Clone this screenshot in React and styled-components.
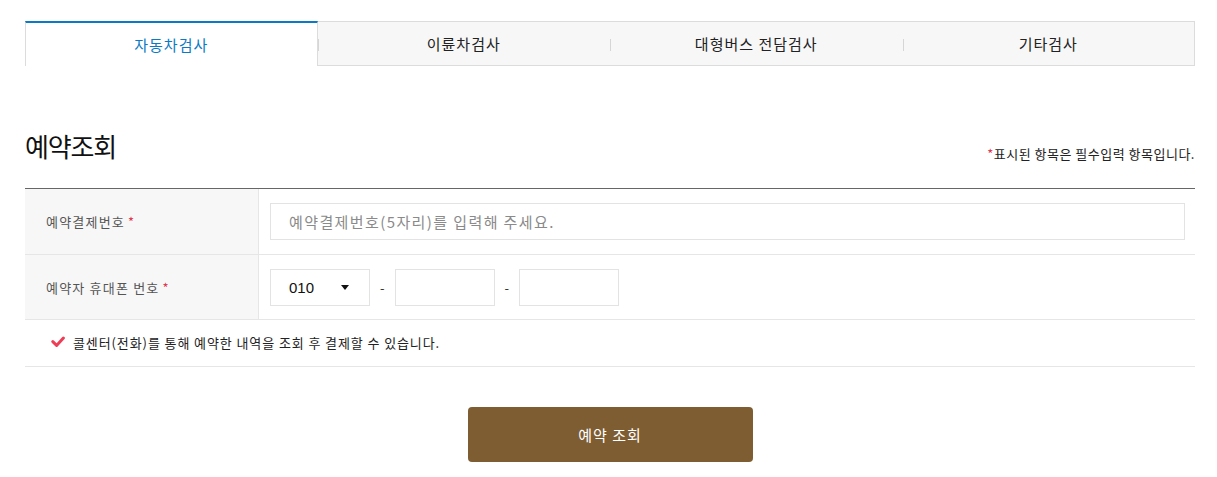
import React from 'react'
import styled, { createGlobalStyle } from 'styled-components'

const GlobalStyle = createGlobalStyle`
  body {
    margin: 0;
    background: #fff;
    font-family: 'Noto Sans CJK KR', 'Noto Sans', sans-serif;
    color: #222;
  }
  * {
    box-sizing: border-box;
  }
`

const Page = styled.div`
  width: 1170px;
  margin: 0 25px;
  padding-top: 21px;
`

const Tabs = styled.ul`
  display: grid;
  grid-template-columns: repeat(4, 1fr);
  margin: 0;
  padding: 0;
  list-style: none;
  height: 45px;
`

const Tab = styled.li`
  position: relative;
  display: flex;
  align-items: center;
  justify-content: center;
  font-size: 15px;
  letter-spacing: 1px;
  color: ${p => (p.$active ? '#0a7ac4' : '#222')};
  background: ${p => (p.$active ? '#fff' : '#f7f7f7')};
  border-top: ${p => (p.$active ? '2px solid #0a7ac4' : '1px solid #dcdcdc')};
  border-bottom: ${p => (p.$active ? 'none' : '1px solid #dcdcdc')};
  border-left: ${p => (p.$active ? '1px solid #dcdcdc' : 'none')};
  border-right: ${p => (p.$active ? '1px solid #dcdcdc' : 'none')};
  &:last-child {
    border-right: 1px solid #dcdcdc;
  }
  ${p =>
    !p.$active &&
    `&::before {
      content: '';
      position: absolute;
      left: 0;
      top: 17px;
      width: 1px;
      height: 12px;
      background: #d6d6d6;
    }`}
`

const Header = styled.div`
  display: flex;
  justify-content: space-between;
  align-items: flex-end;
  margin-top: 62px;
  margin-bottom: 24px;
`

const Title = styled.h2`
  margin: 0;
  font-size: 26px;
  font-weight: 400;
  line-height: 36px;
  color: #111;
  letter-spacing: -1.2px;
`

const Notice = styled.p`
  margin: 0;
  font-size: 13px;
  line-height: 20px;
  color: #222;
  letter-spacing: 0.5px;
`

const Star = styled.span`
  color: #e0374f;
`

const Form = styled.div`
  border-top: 1px solid #666;
`

const Row = styled.div`
  display: grid;
  grid-template-columns: 234px 1fr;
  height: ${p => p.$h || 66}px;
  border-bottom: 1px solid #e6e6e6;
`

const Label = styled.div`
  display: flex;
  align-items: center;
  padding-left: 21px;
  background: #f7f7f7;
  border-right: 1px solid #e6e6e6;
  font-size: 13px;
  color: #555;
  letter-spacing: 1.2px;
  gap: 3px;
`

const Field = styled.div`
  display: flex;
  align-items: center;
  padding: 0 10px 0 11px;
`

const TextInput = styled.input`
  width: ${p => p.$w || '100%'};
  height: 37px;
  border: 1px solid #e3e3e3;
  padding: 0 18px;
  font-family: inherit;
  font-size: 15px;
  color: #222;
  outline: none;
  &::placeholder {
    color: #8a8a8a;
    letter-spacing: 1.4px;
  }
`

const Select = styled.div`
  display: flex;
  align-items: center;
  justify-content: space-between;
  width: 100px;
  height: 37px;
  border: 1px solid #e3e3e3;
  padding: 0 20px 0 18px;
  font-family: 'Liberation Sans', 'Noto Sans', sans-serif;
  font-size: 15px;
  color: #111;
`

const Caret = styled.span`
  width: 0;
  height: 0;
  border-left: 4.5px solid transparent;
  border-right: 4.5px solid transparent;
  border-top: 5px solid #111;
`

const Dash = styled.span`
  width: 24.5px;
  text-align: center;
  font-size: 13px;
  color: #333;
`

const Guide = styled.div`
  display: flex;
  align-items: center;
  gap: 8px;
  height: 47px;
  padding: 0 0 2px 26px;
  border-bottom: 1px solid #e6e6e6;
  font-size: 13px;
  color: #222;
  letter-spacing: 0.9px;
`

const Actions = styled.div`
  display: flex;
  justify-content: center;
  margin-top: 40px;
`

const SubmitButton = styled.button`
  width: 285px;
  height: 55px;
  border: none;
  border-radius: 4px;
  background: #7e5d32;
  color: #fff;
  font-family: inherit;
  font-size: 15px;
  letter-spacing: 1px;
  cursor: pointer;
`

function CheckIcon() {
  return (
    <svg width="14" height="12" viewBox="0 0 14 12">
      <path d="M1.8 5.6 L5.6 9.4 L12.4 2" fill="none" stroke="#ee3e57" strokeWidth="3" strokeLinecap="round" strokeLinejoin="round" />
    </svg>
  )
}

const tabs = ['자동차검사', '이륜차검사', '대형버스 전담검사', '기타검사']

function App() {
  return (
    <>
      <GlobalStyle />
      <Page>
        <Tabs>
          {tabs.map((t, i) => (
            <Tab key={t} $active={i === 0}>
              {t}
            </Tab>
          ))}
        </Tabs>

        <Header>
          <Title>예약조회</Title>
          <Notice>
            <Star>*</Star>표시된 항목은 필수입력 항목입니다.
          </Notice>
        </Header>

        <Form>
          <Row>
            <Label>
              예약결제번호 <Star>*</Star>
            </Label>
            <Field>
              <TextInput placeholder="예약결제번호(5자리)를 입력해 주세요." />
            </Field>
          </Row>
          <Row $h={65}>
            <Label>
              예약자 휴대폰 번호 <Star>*</Star>
            </Label>
            <Field>
              <Select>
                010
                <Caret />
              </Select>
              <Dash>-</Dash>
              <TextInput $w="100px" />
              <Dash>-</Dash>
              <TextInput $w="100px" />
            </Field>
          </Row>
          <Guide>
            <CheckIcon />
            콜센터(전화)를 통해 예약한 내역을 조회 후 결제할 수 있습니다.
          </Guide>
        </Form>

        <Actions>
          <SubmitButton>예약 조회</SubmitButton>
        </Actions>
      </Page>
    </>
  )
}

export default App
